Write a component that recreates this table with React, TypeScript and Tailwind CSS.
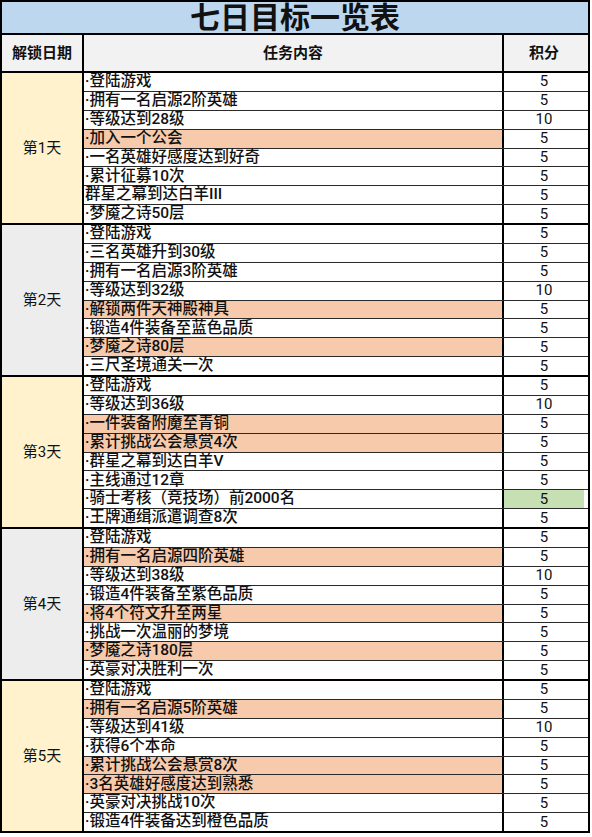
import React from 'react';

type Task = { text: string; score: number; hl?: boolean; green?: boolean };
type Day = { label: string; bg: string; tasks: Task[] };

const days: Day[] = [
  {
    label: '第1天',
    bg: 'bg-[#fff2cc]',
    tasks: [
      { text: '·登陆游戏', score: 5 },
      { text: '·拥有一名启源2阶英雄', score: 5 },
      { text: '·等级达到28级', score: 10 },
      { text: '·加入一个公会', score: 5, hl: true },
      { text: '·一名英雄好感度达到好奇', score: 5 },
      { text: '·累计征募10次', score: 5 },
      { text: '群星之幕到达白羊III', score: 5 },
      { text: '·梦魇之诗50层', score: 5 },
    ],
  },
  {
    label: '第2天',
    bg: 'bg-[#ededed]',
    tasks: [
      { text: '·登陆游戏', score: 5 },
      { text: '·三名英雄升到30级', score: 5 },
      { text: '·拥有一名启源3阶英雄', score: 5 },
      { text: '·等级达到32级', score: 10 },
      { text: '·解锁两件天神殿神具', score: 5, hl: true },
      { text: '·锻造4件装备至蓝色品质', score: 5 },
      { text: '·梦魇之诗80层', score: 5, hl: true },
      { text: '·三尺圣境通关一次', score: 5 },
    ],
  },
  {
    label: '第3天',
    bg: 'bg-[#fff2cc]',
    tasks: [
      { text: '·登陆游戏', score: 5 },
      { text: '·等级达到36级', score: 10 },
      { text: '·一件装备附魔至青铜', score: 5, hl: true },
      { text: '·累计挑战公会悬赏4次', score: 5, hl: true },
      { text: '·群星之幕到达白羊V', score: 5 },
      { text: '·主线通过12章', score: 5 },
      { text: '·骑士考核（竞技场）前2000名', score: 5, green: true },
      { text: '·王牌通缉派遣调查8次', score: 5 },
    ],
  },
  {
    label: '第4天',
    bg: 'bg-[#ededed]',
    tasks: [
      { text: '·登陆游戏', score: 5 },
      { text: '·拥有一名启源四阶英雄', score: 5, hl: true },
      { text: '·等级达到38级', score: 10 },
      { text: '·锻造4件装备至紫色品质', score: 5 },
      { text: '·将4个符文升至两星', score: 5, hl: true },
      { text: '·挑战一次温丽的梦境', score: 5 },
      { text: '·梦魇之诗180层', score: 5, hl: true },
      { text: '·英豪对决胜利一次', score: 5 },
    ],
  },
  {
    label: '第5天',
    bg: 'bg-[#fff2cc]',
    tasks: [
      { text: '·登陆游戏', score: 5 },
      { text: '·拥有一名启源5阶英雄', score: 5, hl: true },
      { text: '·等级达到41级', score: 10 },
      { text: '·获得6个本命', score: 5 },
      { text: '·累计挑战公会悬赏8次', score: 5, hl: true },
      { text: '·3名英雄好感度达到熟悉', score: 5, hl: true },
      { text: '·英豪对决挑战10次', score: 5 },
      { text: '·锻造4件装备达到橙色品质', score: 5 },
    ],
  },
];

const App = () => {
  return (
    <div
      className="w-[592px] h-[837px] bg-white text-[#111]"
      style={{ fontFamily: 'Roboto, "Noto Sans CJK SC", sans-serif' }}
    >
      <div className="w-[590px] border-2 border-black">
        <div className="h-[33px] bg-[#bdd7ee] border-b-2 border-black flex items-center justify-center text-[30px] font-bold leading-[33px]">
          七日目标一览表
        </div>

        <div className="h-[38px] flex bg-[#f2f2f2] border-b-2 border-black text-[15px] font-bold">
          <div className="w-[82px] border-r-2 border-black flex items-center justify-center">解锁日期</div>
          <div className="w-[420px] border-r-2 border-black flex items-center justify-center">任务内容</div>
          <div className="w-[80px] flex items-center justify-center">积分</div>
        </div>

        {days.map((day, di) => (
          <div
            key={day.label}
            className={`h-[150px] flex ${di < days.length - 1 ? 'border-b-2 border-black box-content' : ''}`}
          >
            <div className={`w-[82px] border-r-2 border-black flex items-center justify-center text-[15px] ${day.bg}`}>
              {day.label}
            </div>
            <div className="flex-1 flex flex-col">
              {day.tasks.map((t, ti) => (
                <div
                  key={ti}
                  className={`flex-1 flex ${ti < day.tasks.length - 1 ? 'border-b border-[#2a2a2a]' : ''}`}
                >
                  <div
                    className={`w-[420px] border-r-2 border-black flex items-center pl-[1px] text-[15.5px] font-medium leading-none whitespace-nowrap ${t.hl ? 'bg-[#f7caab]' : ''}`}
                  >
                    {t.text}
                  </div>
                  <div
                    className={`w-[80px] flex items-center justify-center text-[15px] leading-none ${t.green ? 'bg-[#c6e0b4]' : ''}`}
                  >
                    {t.score}
                  </div>
                </div>
              ))}
            </div>
          </div>
        ))}
      </div>
    </div>
  );
};

export default App;
